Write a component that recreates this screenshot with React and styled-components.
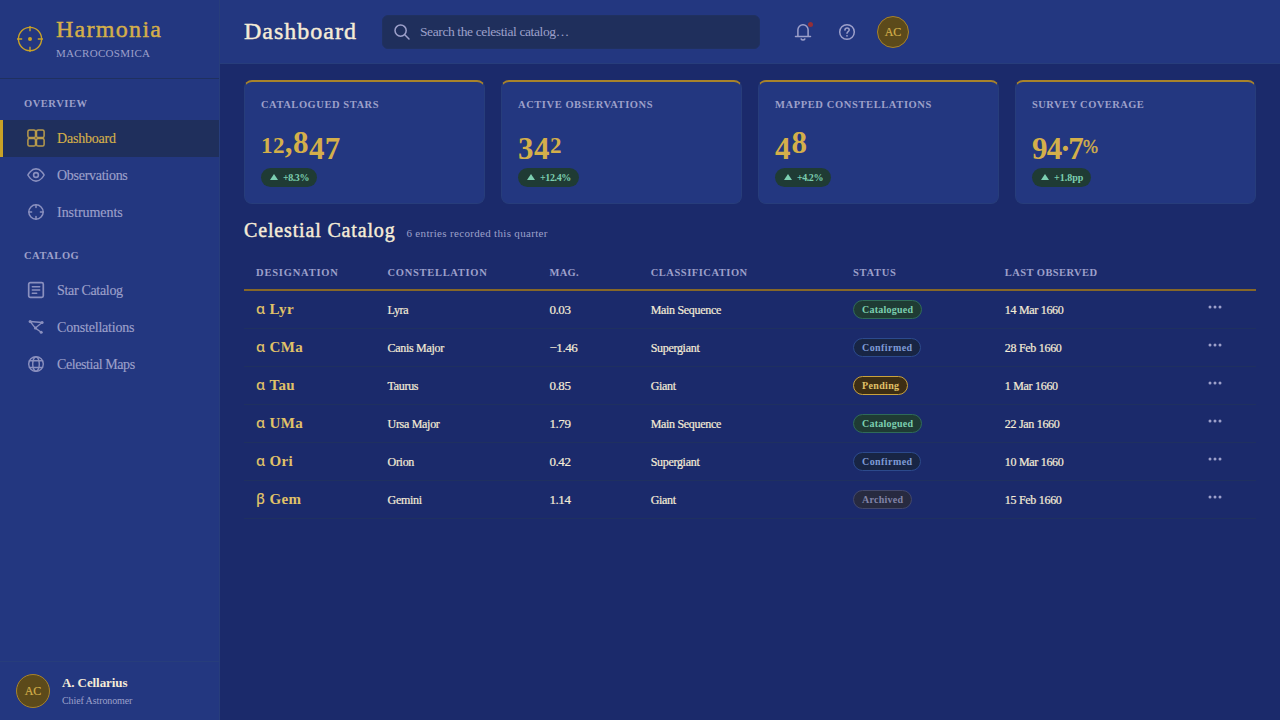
import React from 'react';
import styled, { createGlobalStyle, css } from 'styled-components';

const color = {
  page: '#1b2a6b',
  panel: '#233780',
  inset: '#1f2f5c',
  line: '#273d7b',
  rule: '#1f3060',
  gold: '#c9a227',
  goldText: '#d4af4a',
  goldSoft: '#e0c268',
  goldDark: '#a8832b',
  cream: '#f5ecd7',
  muted: '#9da0ca',
};

const GlobalStyle = createGlobalStyle`
  *, *::before, *::after { box-sizing: border-box; }
  body {
    margin: 0;
    background: ${color.page};
    color: ${color.cream};
    font-family: "Liberation Serif", "Times New Roman", serif;
    font-size: 12px;
    overflow: hidden;
  }
  svg { display: block; flex: none; }
`;

const medium = css`
  -webkit-text-stroke: 0.45px currentColor;
`;

const Shell = styled.div`
  display: grid;
  grid-template-columns: 220px 1fr;
  height: 720px;
`;

const Sidebar = styled.aside`
  display: flex;
  flex-direction: column;
  background: ${color.panel};
  border-right: 1px solid ${color.line};
`;

const Brand = styled.div`
  display: flex;
  align-items: center;
  gap: 12px;
  height: 79px;
  padding: 0 16px;
  border-bottom: 1px solid ${color.rule};
  color: ${color.gold};
`;

const BrandName = styled.div`
  ${medium}
  font-size: 24px;
  line-height: 24px;
  letter-spacing: 1.29px;
  color: ${color.goldText};
`;

const BrandSub = styled.div`
  margin: 6px 0 1px;
  font-size: 11px;
  line-height: 13px;
  letter-spacing: 0.32px;
  color: ${color.muted};
`;

const Nav = styled.nav`
  flex: 1;
  padding-top: 8px;
`;

const NavSection = styled.section`
  margin-bottom: 8px;
`;

const NavHeading = styled.h2`
  margin: 0;
  padding-left: 24px;
  font-size: 10.5px;
  font-weight: 700;
  line-height: 33px;
  letter-spacing: 0.54px;
  color: ${color.muted};
`;

const NavItem = styled.a`
  display: flex;
  align-items: center;
  gap: 12px;
  height: 37px;
  padding-left: 24px;
  border-left: 3px solid ${(p) => (p.$active ? color.gold : 'transparent')};
  background: ${(p) => (p.$active ? color.inset : 'transparent')};
  color: ${(p) => (p.$active ? color.goldText : color.muted)};
  font-size: 14px;
  letter-spacing: ${(p) => p.$track}px;
  -webkit-text-stroke: 0.15px currentColor;

  svg {
    margin-bottom: 1px;
    opacity: 0.85;
  }
`;

const Profile = styled.div`
  display: flex;
  align-items: center;
  gap: 12px;
  height: 59px;
  padding: 0 16px;
  border-top: 1px solid ${color.line};
`;

const Avatar = styled.div`
  display: flex;
  align-items: center;
  justify-content: center;
  width: ${(p) => p.$size}px;
  height: ${(p) => p.$size}px;
  padding-top: 1px;
  border: 1px solid ${color.goldDark};
  border-radius: 50%;
  background: #5c4a1a;
  color: ${color.goldText};
  font-size: 12px;
  -webkit-text-stroke: 0.2px currentColor;
`;

const ProfileName = styled.div`
  font-size: 13px;
  font-weight: 700;
  line-height: 17px;
  letter-spacing: -0.09px;
`;

const ProfileRole = styled.div`
  margin: 3px 0 1px;
  font-size: 10px;
  line-height: 13px;
  letter-spacing: -0.1px;
  color: ${color.muted};
`;

const Main = styled.main`
  display: flex;
  flex-direction: column;
  min-width: 0;
`;

const TopBar = styled.header`
  display: flex;
  align-items: center;
  height: 64px;
  padding: 0 24px;
  background: ${color.panel};
  border-bottom: 1px solid ${color.line};
`;

const PageTitle = styled.h1`
  ${medium}
  width: 138px;
  margin: 0;
  font-size: 24px;
  font-weight: 400;
  letter-spacing: 1px;
`;

const SearchBox = styled.div`
  display: flex;
  align-items: center;
  gap: 9px;
  width: 378px;
  height: 34px;
  margin-right: 25px;
  padding: 1px 0 0 10px;
  border: 1px solid #203160;
  border-radius: 6px;
  background: ${color.inset};
  color: ${color.muted};
  font-size: 13.5px;
  letter-spacing: -0.39px;
`;

const IconButton = styled.button`
  position: relative;
  display: flex;
  align-items: center;
  justify-content: center;
  width: 36px;
  height: 36px;
  margin-right: ${(p) => p.$after}px;
  padding: 0;
  border: 0;
  background: none;
  color: ${color.muted};
`;

const AlertDot = styled.span`
  position: absolute;
  top: 8px;
  right: 8px;
  width: 5px;
  height: 5px;
  border-radius: 50%;
  background: #922f38;
`;

const Content = styled.div`
  flex: 1;
  padding: 16px 24px;
`;

const Cards = styled.div`
  display: grid;
  grid-template-columns: repeat(4, 1fr);
  gap: 16px;
`;

const Card = styled.article`
  height: 124px;
  padding: 16px;
  border: 1px solid ${color.line};
  border-top: 2px solid ${color.goldDark};
  border-radius: 8px;
  background: ${color.panel};
`;

const CardLabel = styled.div`
  padding-top: 1px;
  font-size: 10.5px;
  font-weight: 700;
  line-height: 12px;
  letter-spacing: ${(p) => p.$track}px;
  color: ${color.muted};
`;

const Figure = styled.div`
  height: 32px;
  margin: 14px 0 11px;
  font-size: 31px;
  font-weight: 700;
  line-height: 35px;
  letter-spacing: ${(p) => p.$track}px;
  color: ${color.goldText};
  white-space: nowrap;
`;

const ShortNumeral = styled.span`
  font-size: 23px;
  line-height: 0;
`;

const HangingNumeral = styled.span`
  line-height: 0;
  vertical-align: -6px;
`;

const MidPoint = styled.span`
  line-height: 0;
  vertical-align: 2px;
`;

const Unit = styled.span`
  ${medium}
  font-size: 18px;
  font-weight: 400;
  line-height: 0;
`;

const Trend = styled.div`
  display: flex;
  align-items: center;
  gap: 5px;
  width: fit-content;
  height: 19px;
  padding: 0 8px 0 9px;
  border-radius: 10px;
  background: #1f3b34;
  color: #7ccfb0;
  font-size: 10px;
  font-weight: 700;
  letter-spacing: ${(p) => p.$track}px;

  svg { margin-bottom: 1px; }
`;

const SectionHead = styled.div`
  display: flex;
  align-items: baseline;
  gap: 11px;
  height: 24px;
  margin: 15px 0 12px;
`;

const SectionTitle = styled.h2`
  ${medium}
  margin: 0;
  font-size: 20px;
  font-weight: 400;
  line-height: 23px;
  letter-spacing: 0.84px;
`;

const SectionNote = styled.span`
  font-size: 11px;
  letter-spacing: 0.32px;
  color: ${color.muted};
`;

const Table = styled.table`
  width: 100%;
  table-layout: fixed;
  border-collapse: separate;
  border-spacing: 0;
`;

const Th = styled.th`
  width: ${(p) => p.$width}%;
  height: 36px;
  padding: 0 12px;
  border-bottom: 2px solid #866728;
  text-align: left;
  font-size: 10.5px;
  letter-spacing: ${(p) => p.$track}px;
  color: ${color.muted};
`;

const Td = styled.td`
  height: 38px;
  padding: 1px 12px 0;
  border-bottom: 1px solid ${color.rule};
  letter-spacing: -0.3px;
  white-space: nowrap;
  ${(p) => p.$medium && '-webkit-text-stroke: 0.2px currentColor;'}
`;

const Magnitude = styled(Td)`
  font-size: 13px;
  letter-spacing: -0.42px;
`;

const Designation = styled(Td)`
  padding: 0 12px 3px;
  color: ${color.goldSoft};
  font-size: 15px;
  font-weight: 700;
  line-height: 20px;
  letter-spacing: 0.35px;
`;

const Greek = styled.span`
  display: inline-block;
  width: 13.5px;
  font-family: "Noto Sans", sans-serif;
  font-size: 14.5px;
  font-weight: 500;
  line-height: 20px;
`;

const BadgeCell = styled(Td)`
  padding-top: 0;
`;

const badgeTone = {
  Catalogued: ['#1f3b34', '#2f6b58', '#7ccfb0'],
  Confirmed: ['#182544', '#2c4a8c', '#7f9bd6'],
  Pending: ['#3d2e14', '#c9a23c', '#e0c268'],
  Archived: ['#272a40', '#42476a', '#8184a8'],
};

const badgeTrack = { Catalogued: 0.24, Confirmed: 0.42, Pending: 0.33, Archived: 0.25 };

const Badge = styled.span`
  display: flex;
  align-items: center;
  width: fit-content;
  height: 19px;
  padding: 0 7.5px 0 8px;
  border: 1px solid ${(p) => badgeTone[p.$status][1]};
  border-radius: 10px;
  background: ${(p) => badgeTone[p.$status][0]};
  color: ${(p) => badgeTone[p.$status][2]};
  font-size: 10px;
  font-weight: 700;
  letter-spacing: ${(p) => badgeTrack[p.$status]}px;
`;

const ActionCell = styled(Td)`
  padding: 0 33px 5px 0;
  color: ${color.muted};

  svg { margin-left: auto; }
`;

const Glyph = ({ size = 18, children }) => (
  <svg
    width={size}
    height={size}
    viewBox={`0 0 ${size} ${size}`}
    fill="none"
    stroke="currentColor"
    strokeWidth="1.5"
    strokeLinecap="round"
    strokeLinejoin="round"
  >
    {children}
  </svg>
);

const Logo = () => (
  <Glyph size={28}>
    <g strokeWidth="1.4" strokeLinecap="butt">
      <circle cx="14" cy="14" r="11.6" />
      <path d="M14 1v5.2M14 21.8V27M1 14h5.2M21.8 14H27" />
      <circle cx="14" cy="14" r="2" fill="currentColor" stroke="none" />
    </g>
  </Glyph>
);

const icons = {
  grid: (
    <Glyph>
      <rect x="0.9" y="0.9" width="7.6" height="7.6" rx="1.6" />
      <rect x="9.5" y="0.9" width="7.6" height="7.6" rx="1.6" />
      <rect x="0.9" y="9.5" width="7.6" height="7.6" rx="1.6" />
      <rect x="9.5" y="9.5" width="7.6" height="7.6" rx="1.6" />
    </Glyph>
  ),
  eye: (
    <Glyph>
      <path strokeWidth="1.6" d="M.9 9S4 2.9 9 2.9 17.1 9 17.1 9 14 15.1 9 15.1.9 9 .9 9z" />
      <circle cx="9" cy="9" r="2.4" strokeWidth="1.6" />
    </Glyph>
  ),
  reticle: (
    <Glyph>
      <circle cx="9" cy="9" r="7.2" />
      <path d="M9 2v2.6M9 13.4V16M2 9h2.6M13.4 9H16" />
    </Glyph>
  ),
  list: (
    <Glyph>
      <rect x="1.7" y="1.7" width="14.6" height="14.6" rx="1.6" strokeWidth="1.7" />
      <path d="M5.3 5.8h7.4M5.3 9h7.4M5.3 12.2h4.4" />
    </Glyph>
  ),
  stars: (
    <Glyph>
      <path strokeWidth="1.3" d="M3.1 3.5l12 1M3.1 3.5l5.3 6.6M15.1 4.5l-6.7 5.6M8.4 10.1l5.8 4.1" />
      <g fill="currentColor" stroke="none">
        <circle cx="3.1" cy="3.5" r="1.5" />
        <circle cx="15.1" cy="4.5" r="1.5" />
        <circle cx="8.4" cy="10.1" r="1.5" />
        <circle cx="14.2" cy="14.2" r="1.5" />
      </g>
    </Glyph>
  ),
  globe: (
    <Glyph>
      <g strokeWidth="1.4">
        <circle cx="9" cy="9" r="7.3" />
        <ellipse cx="9" cy="9" rx="3.3" ry="7.3" />
        <path d="M2.4 5.7h13.2M2.4 12.5h13.2" />
      </g>
    </Glyph>
  ),
};

const SearchIcon = () => (
  <Glyph>
    <circle cx="7.6" cy="7.6" r="5.6" />
    <path d="M11.8 11.8l4.2 4.2" />
  </Glyph>
);

const BellIcon = () => (
  <Glyph>
    <path d="M1.5 13.5h15M3.9 13.5V6.8a5.1 5.1 0 0 1 10.2 0v6.7" />
    <path d="M7.2 16c.7 1.2 2.9 1.2 3.6 0" />
  </Glyph>
);

const HelpIcon = () => (
  <Glyph>
    <circle cx="9" cy="9" r="7.3" />
    <path d="M6.9 7.1c.1-1.3 1-2 2.2-2s2.1.8 2.1 1.9c0 1.5-2.2 1.7-2.2 3.3" />
    <circle cx="9" cy="12.8" r="0.9" fill="currentColor" stroke="none" />
  </Glyph>
);

const UpArrow = () => (
  <svg width="8" height="6" viewBox="0 0 8 6" fill="currentColor">
    <path d="M4 0l4 6H0z" />
  </svg>
);

const MoreIcon = () => (
  <svg width="16" height="16" viewBox="0 0 16 16" fill="currentColor">
    <circle cx="3" cy="8" r="1.5" />
    <circle cx="8" cy="8" r="1.5" />
    <circle cx="13" cy="8" r="1.5" />
  </svg>
);

/* Sets a number with old-style numerals: 0-2 at x-height, 6 and 8 tall, the rest hanging. */
const OldStyle = ({ value }) =>
  [...value].map((ch, i) => {
    if ('012'.includes(ch)) return <ShortNumeral key={i}>{ch}</ShortNumeral>;
    if ('34579'.includes(ch)) return <HangingNumeral key={i}>{ch}</HangingNumeral>;
    if (ch === '.') return <MidPoint key={i}>{ch}</MidPoint>;
    return ch;
  });

const navigation = [
  {
    title: 'OVERVIEW',
    items: [
      { label: 'Dashboard', icon: 'grid', track: -0.2, active: true },
      { label: 'Observations', icon: 'eye', track: -0.28 },
      { label: 'Instruments', icon: 'reticle', track: -0.03 },
    ],
  },
  {
    title: 'CATALOG',
    items: [
      { label: 'Star Catalog', icon: 'list', track: -0.32 },
      { label: 'Constellations', icon: 'stars', track: -0.2 },
      { label: 'Celestial Maps', icon: 'globe', track: -0.42 },
    ],
  },
];

const stats = [
  { label: 'CATALOGUED STARS', labelTrack: 0.54, value: '12,847', track: 0.4, trend: '+8.3%', trendTrack: -0.45 },
  { label: 'ACTIVE OBSERVATIONS', labelTrack: 0.56, value: '342', track: 0.5, trend: '+12.4%', trendTrack: -0.38 },
  { label: 'MAPPED CONSTELLATIONS', labelTrack: 0.61, value: '48', track: 1, trend: '+4.2%', trendTrack: -0.45 },
  { label: 'SURVEY COVERAGE', labelTrack: 0.44, value: '94.7', unit: '%', track: -0.8, trend: '+1.8pp', trendTrack: 0 },
];

const columns = [
  ['DESIGNATION', 13, 0.8],
  ['CONSTELLATION', 16, 0.7],
  ['MAG.', 10, 0.3],
  ['CLASSIFICATION', 20, 0.53],
  ['STATUS', 15, 0.7],
  ['LAST OBSERVED', 15, 0.42],
  ['', 11, 0],
];

const entries = [
  ['α', 'Lyr', 'Lyra', '0.03', 'Main Sequence', 'Catalogued', '14 Mar 1660'],
  ['α', 'CMa', 'Canis Major', '−1.46', 'Supergiant', 'Confirmed', '28 Feb 1660'],
  ['α', 'Tau', 'Taurus', '0.85', 'Giant', 'Pending', '1 Mar 1660'],
  ['α', 'UMa', 'Ursa Major', '1.79', 'Main Sequence', 'Catalogued', '22 Jan 1660'],
  ['α', 'Ori', 'Orion', '0.42', 'Supergiant', 'Confirmed', '10 Mar 1660'],
  ['β', 'Gem', 'Gemini', '1.14', 'Giant', 'Archived', '15 Feb 1660'],
];

export default function App() {
  return (
    <>
      <GlobalStyle />
      <Shell>
        <Sidebar>
          <Brand>
            <Logo />
            <div>
              <BrandName>Harmonia</BrandName>
              <BrandSub>MACROCOSMICA</BrandSub>
            </div>
          </Brand>
          <Nav>
            {navigation.map((group) => (
              <NavSection key={group.title}>
                <NavHeading>{group.title}</NavHeading>
                {group.items.map((item) => (
                  <NavItem key={item.label} $active={item.active} $track={item.track}>
                    {icons[item.icon]}
                    {item.label}
                  </NavItem>
                ))}
              </NavSection>
            ))}
          </Nav>
          <Profile>
            <Avatar $size={34}>AC</Avatar>
            <div>
              <ProfileName>A. Cellarius</ProfileName>
              <ProfileRole>Chief Astronomer</ProfileRole>
            </div>
          </Profile>
        </Sidebar>
        <Main>
          <TopBar>
            <PageTitle>Dashboard</PageTitle>
            <SearchBox>
              <SearchIcon />
              Search the celestial catalog…
            </SearchBox>
            <IconButton $after={8}>
              <BellIcon />
              <AlertDot />
            </IconButton>
            <IconButton $after={12}>
              <HelpIcon />
            </IconButton>
            <Avatar $size={32}>AC</Avatar>
          </TopBar>
          <Content>
            <Cards>
              {stats.map((s) => (
                <Card key={s.label}>
                  <CardLabel $track={s.labelTrack}>{s.label}</CardLabel>
                  <Figure $track={s.track}>
                    <OldStyle value={s.value} />
                    {s.unit && <Unit>{s.unit}</Unit>}
                  </Figure>
                  <Trend $track={s.trendTrack}>
                    <UpArrow />
                    {s.trend}
                  </Trend>
                </Card>
              ))}
            </Cards>
            <SectionHead>
              <SectionTitle>Celestial Catalog</SectionTitle>
              <SectionNote>6 entries recorded this quarter</SectionNote>
            </SectionHead>
            <Table>
              <thead>
                <tr>
                  {columns.map(([name, width, track]) => (
                    <Th key={name} $width={width} $track={track}>{name}</Th>
                  ))}
                </tr>
              </thead>
              <tbody>
                {entries.map(([letter, abbr, constellation, mag, kind, status, date]) => (
                  <tr key={abbr}>
                    <Designation>
                      <Greek>{letter}</Greek>{abbr}
                    </Designation>
                    <Td $medium>{constellation}</Td>
                    <Magnitude $medium>{mag}</Magnitude>
                    <Td $medium>{kind}</Td>
                    <BadgeCell>
                      <Badge $status={status}>{status}</Badge>
                    </BadgeCell>
                    <Td $medium>{date}</Td>
                    <ActionCell>
                      <MoreIcon />
                    </ActionCell>
                  </tr>
                ))}
              </tbody>
            </Table>
          </Content>
        </Main>
      </Shell>
    </>
  );
}
